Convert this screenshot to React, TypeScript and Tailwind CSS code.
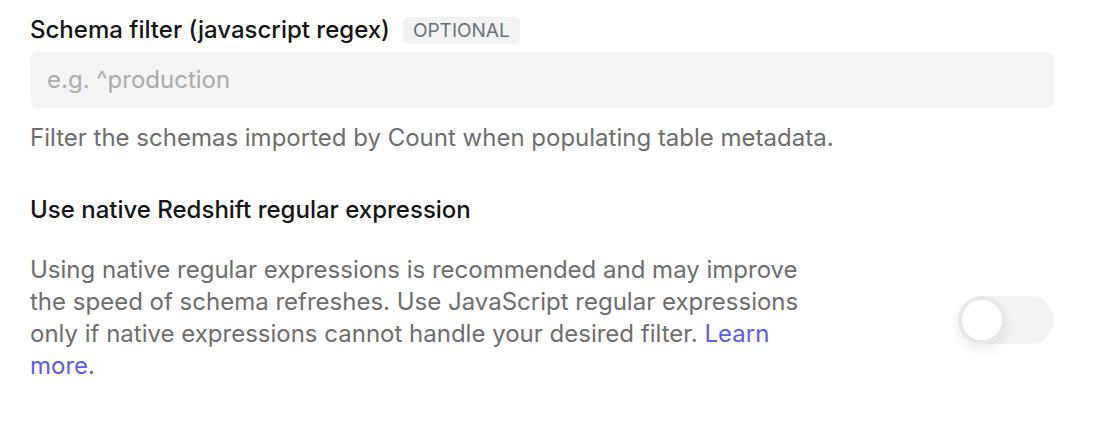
import React from "react";

export default function App() {
  return (
    <div
      className="w-[1114px] h-[430px] bg-white pl-[30px] pt-4"
      style={{ fontFamily: "Inter, 'Noto Sans', sans-serif" }}
    >
      <div className="w-[1024px]">
        <div className="flex items-center h-7 mb-2">
          <span className="text-[24px] leading-7 font-medium text-[#151515]">
            Schema filter (javascript regex)
          </span>
          <span className="ml-[13px] h-[27px] px-[10px] rounded-[6px] bg-[#f2f2f2] text-[19px] leading-[27px] text-[#67737b]">
            OPTIONAL
          </span>
        </div>
        <div className="h-14 rounded-lg bg-[#f4f4f4] flex items-center px-[17px]">
          <span className="text-[24px] text-[#ababab]">e.g. ^production</span>
        </div>
        <p className="mt-[14px] text-[24px] leading-8 text-[#6e6e6e]">
          Filter the schemas imported by Count when populating table metadata.
        </p>
        <p className="mt-10 text-[24px] leading-8 font-medium text-[#151515]">
          Use native Redshift regular expression
        </p>
        <div className="mt-[28px] flex items-center justify-between">
          <p className="w-[785px] text-[24px] leading-8 text-[#6e6e6e]">
            Using native regular expressions is recommended and may improve the
            speed of schema refreshes. Use JavaScript regular expressions only if
            native expressions cannot handle your desired filter.{" "}
            <a className="text-[#5c5cf5]">Learn more</a>.
          </p>
          <div className="w-24 h-12 mt-1 rounded-full bg-[#f3f3f3] flex items-center">
            <div className="w-12 h-12 rounded-full bg-white border-4 border-[#e8e8e8] shadow-[0_6px_12px_rgba(0,0,0,0.08)]" />
          </div>
        </div>
      </div>
    </div>
  );
}
